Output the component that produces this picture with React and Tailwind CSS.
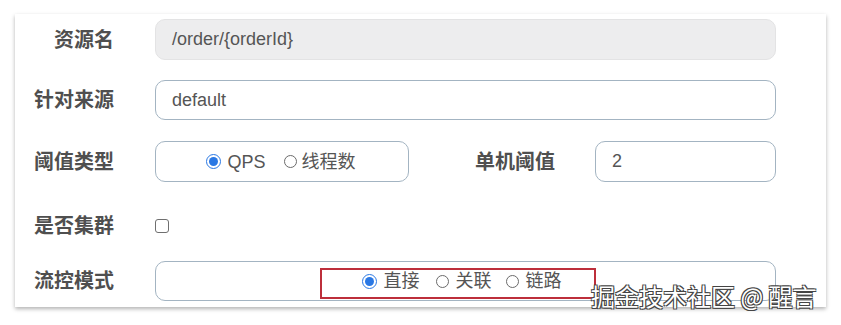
const font = 'font-["Liberation_Sans","Noto_Sans_CJK_SC",sans-serif]'

function Radio({ checked, label, className = '', gap = 'ml-[7px]' }) {
  return (
    <span className={`flex items-center ${className}`}>
      {checked ? (
        <span className="w-[15px] h-[15px] rounded-full border-[1.5px] border-[#2a78e4] flex items-center justify-center bg-white">
          <span className="w-[9px] h-[9px] rounded-full bg-[#2a78e4]" />
        </span>
      ) : (
        <span className="w-[13px] h-[13px] rounded-full border border-[#6b6b6b] bg-white" />
      )}
      <span className={`${gap} text-[18px] text-[#555] leading-none`}>{label}</span>
    </span>
  )
}

function Label({ children, className = 'w-[99px]' }) {
  return (
    <div className={`${className} text-right text-[20px] font-bold text-[#4f4f4f] leading-none shrink-0`}>
      {children}
    </div>
  )
}

export default function App() {
  return (
    <div className={`w-[841px] h-[325px] bg-white pl-[15px] pt-[14px] ${font}`}>
      <div className="relative w-[811px] bg-white shadow-[0_2px_4px_rgba(0,0,0,0.3)] pt-[5px] pb-[6px] pr-[50px]">
        <div className="flex items-center h-[41px]">
          <Label>资源名</Label>
          <div className="ml-[41px] flex-1 h-full rounded-[10px] bg-[#ededee] border border-[#e3e3e4] flex items-center pl-[16px] text-[18px] text-[#555]">
            /order/{'{'}orderId{'}'}
          </div>
        </div>

        <div className="flex items-center h-[40px] mt-[20px]">
          <Label>针对来源</Label>
          <div className="ml-[41px] flex-1 h-full rounded-[10px] bg-white border border-[#a3b4c2] flex items-center pl-[16px] text-[18px] text-[#555]">
            default
          </div>
        </div>

        <div className="flex items-center h-[41px] mt-[21px]">
          <Label>阈值类型</Label>
          <div className="ml-[41px] w-[254px] h-full rounded-[10px] bg-white border border-[#a3b4c2] flex items-center justify-center pr-[2px]">
            <Radio checked label="QPS" gap="ml-[6px]" />
            <Radio label="线程数" className="ml-[18px]" gap="ml-[5px]" />
          </div>
          <Label className="w-[146px]">单机阈值</Label>
          <div className="ml-[40px] flex-1 h-full rounded-[10px] bg-white border border-[#a3b4c2] flex items-center pl-[16px] text-[18px] text-[#555]">
            2
          </div>
        </div>

        <div className="flex items-center h-[48px] mt-[20px]">
          <Label>是否集群</Label>
          <span className="ml-[41px] w-[14px] h-[14px] rounded-[3px] border border-[#6f6f6f] bg-white" />
        </div>

        <div className="flex items-center h-[40px] mt-[11px]">
          <Label>流控模式</Label>
          <div className="relative ml-[41px] flex-1 h-full rounded-[10px] bg-white border border-[#a3b4c2] flex items-center justify-center pr-[8px]">
            <Radio checked label="直接" />
            <Radio label="关联" className="ml-[16px]" />
            <Radio label="链路" className="ml-[14px]" />
            <div className="absolute left-[164px] top-[6px] w-[276px] h-[31px] border-2 border-[#bd2f3b]" />
          </div>
        </div>

        <div className="absolute left-[576px] top-[270px] text-[24px] leading-none text-white [text-shadow:1px_1px_0_#444,-1px_-1px_0_#444,1px_-1px_0_#444,-1px_1px_0_#444] font-['Noto_Sans_CJK_SC',sans-serif] whitespace-nowrap">
          掘金技术社区 @ 醒言
        </div>
      </div>
    </div>
  )
}
